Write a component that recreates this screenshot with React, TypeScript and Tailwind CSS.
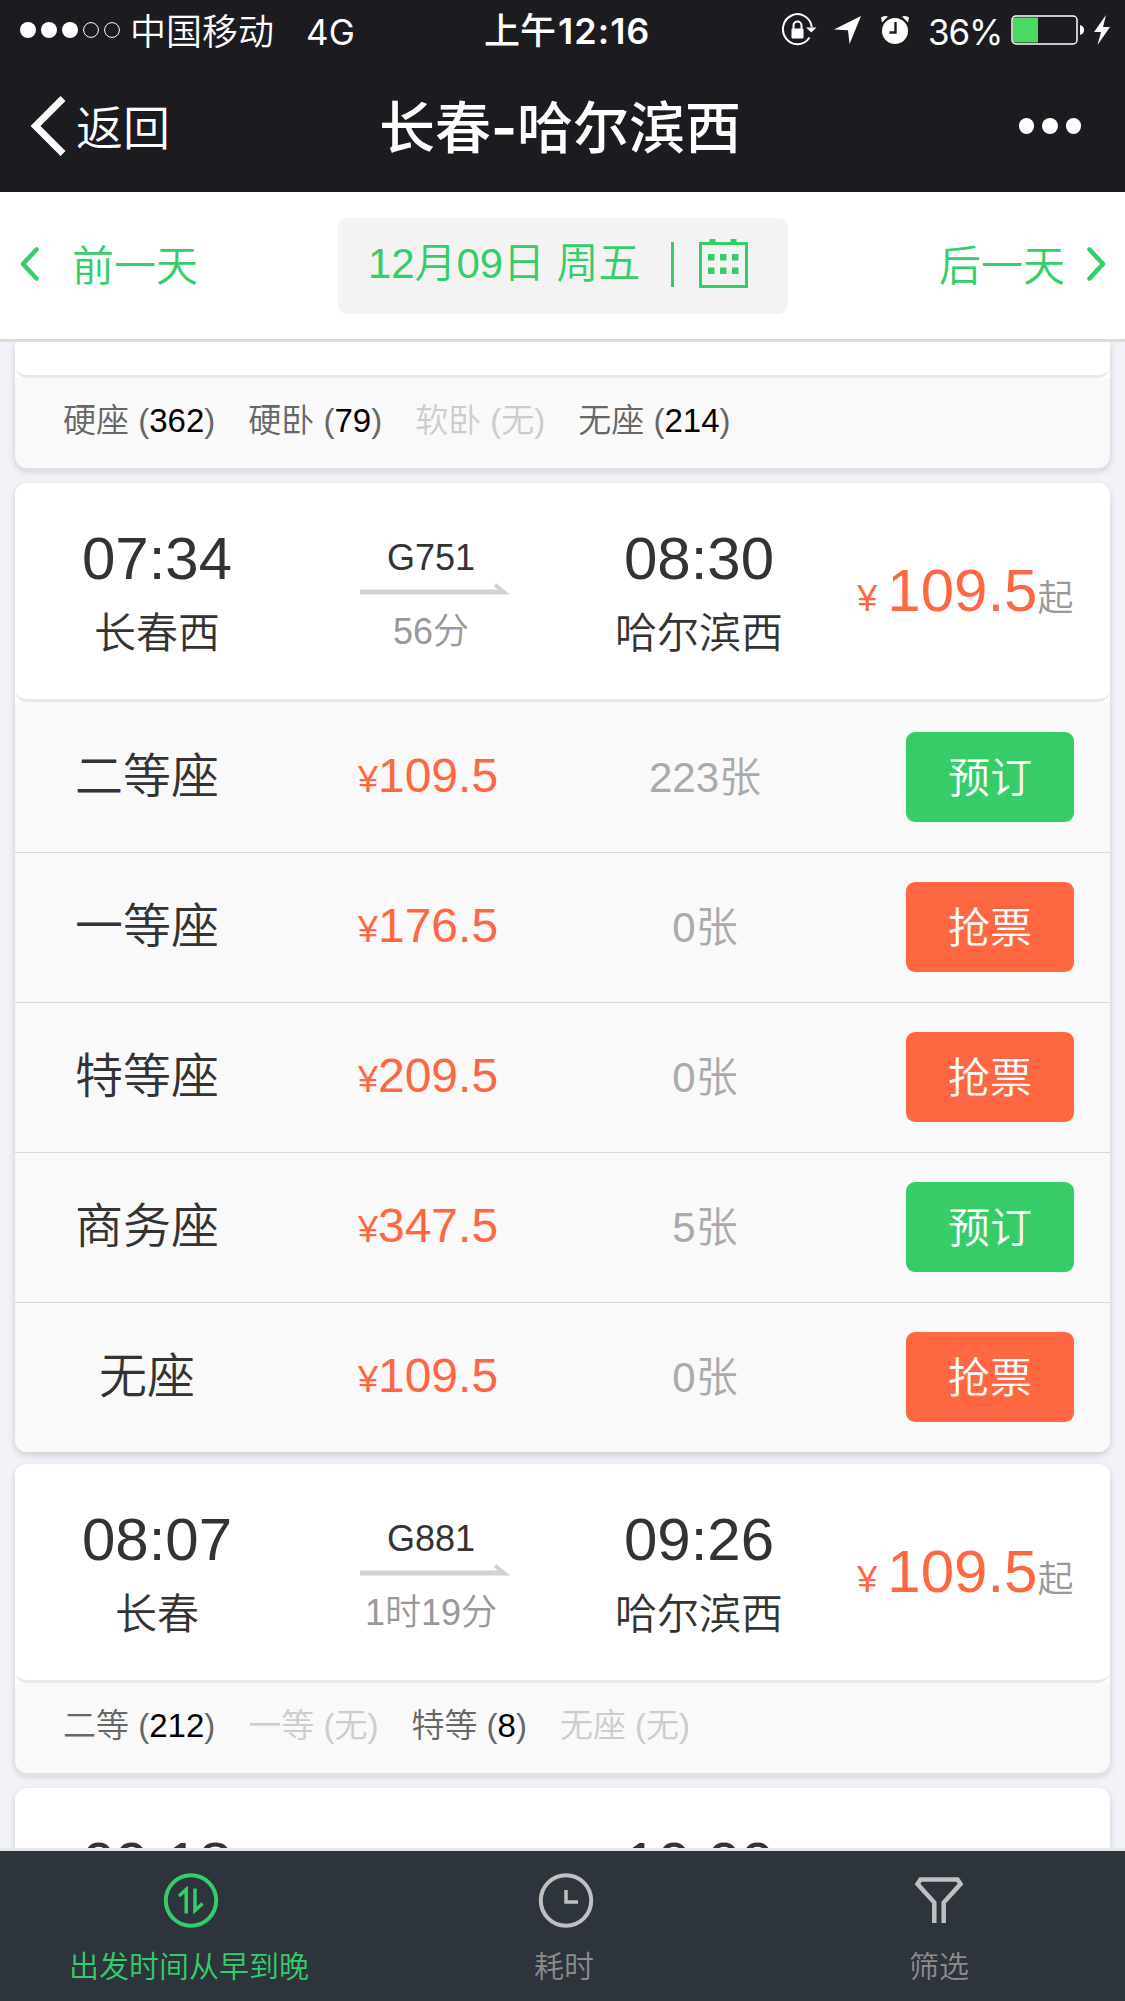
import type { ReactNode } from 'react'

type Seat = { name: string; price: string; left: number }
type Tag = { name: string; left: number }

interface Train {
  no: string
  depart: string
  from: string
  arrive: string
  to: string
  duration: string
  price: string
}

const G751: Train = { no: 'G751', depart: '07:34', from: '长春西', arrive: '08:30', to: '哈尔滨西', duration: '56分', price: '109.5' }
const G881: Train = { no: 'G881', depart: '08:07', from: '长春', arrive: '09:26', to: '哈尔滨西', duration: '1时19分', price: '109.5' }

const seats: Seat[] = [
  { name: '二等座', price: '109.5', left: 223 },
  { name: '一等座', price: '176.5', left: 0 },
  { name: '特等座', price: '209.5', left: 0 },
  { name: '商务座', price: '347.5', left: 5 },
  { name: '无座', price: '109.5', left: 0 },
]

function StatusBar() {
  return (
    <div className="flex h-[60px] items-center font-['Inter','Noto_Sans_CJK_SC',sans-serif] text-[36px] font-normal leading-[60px]">
      <div className="flex w-[484px] items-center pl-5">
        <svg width="101" height="18" viewBox="0 0 101 18" fill="#fff">
          <circle cx="8" cy="9" r="8" />
          <circle cx="29" cy="9" r="8" />
          <circle cx="50" cy="9" r="8" />
          <circle cx="71" cy="9" r="7.4" fill="none" stroke="#fff" />
          <circle cx="92" cy="9" r="7.4" fill="none" stroke="#fff" />
        </svg>
        <span className="ml-[9px] pt-[3px] font-[350]">中国移动</span>
        <span className="ml-[32px] pt-[3px] text-[35px]">4G</span>
      </div>
      <span className="w-[297px] whitespace-nowrap pt-[2px] font-medium">
        上午<span className="ml-[2px] text-[36px] font-semibold tracking-[1px]">12:16</span>
      </span>
      <svg width="36" height="34" viewBox="0 0 36 34" fill="none" stroke="#fff" strokeWidth="2">
        <path d="M28.5 24.500A14.500 15 0 1 1 30.800 14" />
        <path d="M25 14.500h10.500l-5.200 5z" fill="#fff" stroke="none" />
        <rect x="10.500" y="15.500" width="12" height="10" rx="1" fill="#fff" stroke="none" />
        <path d="M12.500 17v-4.500a4 4 0 0 1 8 0V17" />
      </svg>
      <svg className="ml-[17px]" width="27" height="28" viewBox="0 0 27 28" fill="#fff">
        <path d="M27 0L0 13.500l14 .8L15.500 28z" />
      </svg>
      <svg className="ml-[20px]" width="28" height="30" viewBox="0 0 28 30">
        <circle cx="14" cy="16" r="13" fill="#fff" />
        <path d="M1 7.500L0 2.500Q3 0 7 1.500zM27 7.500l1-5Q25 0 21 1.500z" fill="#fff" />
        <path d="M14.500 7v10.500H8.500" fill="none" stroke="#1c1b20" strokeWidth="2.400" />
      </svg>
      <span className="ml-[19px] w-[83px] whitespace-nowrap pt-[3px] text-[35px] tracking-[-1.2px]">36%</span>
      <svg width="74" height="30" viewBox="0 0 74 30">
        <rect x="1" y="1" width="65" height="28" rx="4" fill="none" stroke="#fff" strokeWidth="1.500" />
        <path d="M3 2.500h24v25H3a1.500 1.500 0 0 1-1-1.500V4a1.500 1.500 0 0 1 1-1.500z" fill="#4cd964" />
        <path d="M69 10q4 1 4 5t-4 5z" fill="#fff" />
      </svg>
      <svg className="ml-[9px]" width="16" height="30" viewBox="0 0 16 30" fill="#fff">
        <path d="M12 0L0 17h7L3.500 30 16 12H9z" />
      </svg>
    </div>
  )
}

function NavBar() {
  return (
    <div className="grid h-[132px] grid-cols-[375px_1fr_375px] items-center">
      <div className="flex items-center pl-[30px]">
        <svg width="36" height="60" viewBox="0 0 36 60" fill="none" stroke="#fff" strokeWidth="7">
          <path d="M33 2.500L5.500 30 33 57.500" />
        </svg>
        <span className="ml-[10px] pt-[5px] text-[47px] leading-none">返回</span>
      </div>
      <h1 className="whitespace-nowrap pr-[5px] pt-[3px] text-center font-['Inter','Noto_Sans_CJK_SC',sans-serif] text-[56px] font-medium leading-none">
        长春<span className="font-bold">-</span>哈尔滨西
      </h1>
      <div className="flex justify-end gap-[8px] pr-[44px]">
        <i className="size-[15.500px] rounded-full bg-white" />
        <i className="size-[15.500px] rounded-full bg-white" />
        <i className="size-[15.500px] rounded-full bg-white" />
      </div>
    </div>
  )
}

function CalendarIcon() {
  return (
    <svg width="49" height="50" viewBox="0 0 49 50" fill="#35cd69">
      <rect x="1.500" y="4.500" width="46" height="43" fill="none" stroke="#35cd69" strokeWidth="3" />
      <path d="M10.500 0h6v5h-6zM31.500 0h6v5h-6z" />
      <path d="M9 15h6.500v6.500H9zM21 15h6.500v6.500H21zM33 15h6.500v6.500H33zM9 28.500h6.500V35H9zM21 28.500h6.500V35H21zM33 28.500h6.500V35H33z" />
    </svg>
  )
}

function Chevron({ flip }: { flip?: boolean }) {
  return (
    <svg className={flip ? '-mt-[3px] rotate-180' : '-mt-[3px]'} width="19" height="34" viewBox="0 0 19 34" fill="none" stroke="#35cd69" strokeWidth="4.500" strokeLinecap="round" strokeLinejoin="round">
      <path d="M16.500 2.500L3 17l13.500 14.500" />
    </svg>
  )
}

function DateBar() {
  return (
    <div className="flex h-[150px] items-center justify-between border-b-[3px] border-[#dcdcdc] bg-white px-[20px] text-[42px] leading-[60px] text-[#35cd69]">
      <div className="flex w-[318px] items-center">
        <Chevron />
        <span className="ml-[33px] pt-[3px]">前一天</span>
      </div>
      <div className="flex h-24 w-[450px] shrink-0 items-center rounded-[9px] bg-[#f3f3f3] pl-[30px]">
        <span className="w-[303px] whitespace-nowrap pb-[3px] tracking-[-0.1px]">12月09日 周五</span>
        <i className="-mt-[2px] h-[45px] w-[3px] bg-[#35cd69]" />
        <span className="-mt-[3px] ml-[25px]">
          <CalendarIcon />
        </span>
      </div>
      <div className="-mr-[1px] flex flex-1 items-center justify-end">
        <span className="mr-[22px] pt-[3px]">后一天</span>
        <Chevron flip />
      </div>
    </div>
  )
}

function TrainHead({ train }: { train: Train }) {
  return (
    <div className="flex h-[219px] rounded-[12px] border-b-[3px] border-[#e9e9e9] bg-white text-[#333]">
      <div className="w-[284px] pt-[42px] text-center">
        <div className="text-[60px] leading-[68px]">{train.depart}</div>
        <div className="mt-[11px] text-[42px] leading-[60px]">{train.from}</div>
      </div>
      <div className="flex w-[264px] flex-col items-center pt-[51px] text-[36px] leading-[48px]">
        <div>{train.no}</div>
        <svg className="ml-[8px] mt-px" width="150" height="12" viewBox="0 0 150 12" fill="#d2d2d2">
          <path d="M0 6.500h138l-4-3 2-3.500 14 11.500H0z" />
        </svg>
        <div className="mt-[13px] text-[#999]">{train.duration}</div>
      </div>
      <div className="w-[272px] pt-[42px] text-center">
        <div className="text-[60px] leading-[68px]">{train.arrive}</div>
        <div className="mt-[11px] text-[42px] leading-[60px]">{train.to}</div>
      </div>
      <div className="flex-1 whitespace-nowrap pr-[36.500px] pt-[74px] text-right text-[36px] leading-[68px] text-[#ff6742]">
        ¥ <span className="text-[60px]">{train.price}</span>
        <span className="text-[#999]">起</span>
      </div>
    </div>
  )
}

function SeatRow({ seat }: { seat: Seat }) {
  return (
    <div className="flex h-[150px] items-center text-center text-[42px] leading-[60px] shadow-[0_1px_0_#d9d9d9] last:shadow-none">
      <div className="w-[264px] text-[48px] text-[#333]">{seat.name}</div>
      <div className="w-[298px] pt-px text-[36px] text-[#ff6742]">
        ¥<span className="text-[48px]">{seat.price}</span>
      </div>
      <div className="w-[256px] pt-px text-[#aaa]">{seat.left}张</div>
      <button className={`ml-[73px] h-[90px] w-[168px] rounded-[9px] pt-[3px] text-white ${seat.left > 0 ? 'bg-[#36cd69]' : 'bg-[#ff6742]'}`}>
        {seat.left > 0 ? '预订' : '抢票'}
      </button>
    </div>
  )
}

function TagRow({ tags }: { tags: Tag[] }) {
  return (
    <div className="flex h-[90px] items-center gap-[33px] rounded-b-[12px] bg-[#f9f9f9] pb-[4px] pl-[48px] text-[33px] leading-[48px] shadow-[0_4px_0_#e0e1e3]">
      {tags.map((t) => (
        <span key={t.name} className={t.left > 0 ? 'text-[#666]' : 'text-[#ccc]'}>
          {t.name} ({t.left > 0 ? <b className="font-normal text-black">{t.left}</b> : '无'})
        </span>
      ))}
    </div>
  )
}

function Card({ children, className = '' }: { children: ReactNode; className?: string }) {
  return (
    <section className={`shrink-0 rounded-[12px] bg-white shadow-[0_3px_7px_rgba(0,0,0,0.16)] ${className}`}>{children}</section>
  )
}

function TabBar() {
  return (
    <nav className="grid h-[153px] grid-cols-[382px_365px_378px] border-t-[3px] border-[#e6e6e6] bg-[#2e343c] text-[30px] leading-[44px] text-[#8c8c8c]">
      <div className="flex flex-col items-center pt-[21px] text-[#35cd69]">
        <svg width="56" height="57" viewBox="0 0 56 57" fill="none" stroke="#35cd69" strokeWidth="3.500">
          <circle cx="28" cy="28.500" r="25.200" strokeWidth="4" />
          <path d="M16 24l7.200-6.500v24M32 16.500v22l7.500-7" />
        </svg>
        <span className="mr-[4px] mt-[16px]">出发时间从早到晚</span>
      </div>
      <div className="flex flex-col items-center pt-[21px]">
        <svg className="ml-[3px]" width="56" height="57" viewBox="0 0 56 57" fill="none" stroke="#c0c0c0" strokeWidth="3.500">
          <circle cx="28" cy="28.500" r="25.200" strokeWidth="4" />
          <path d="M28 18v12h12" />
        </svg>
        <span className="mr-px mt-[16px]">耗时</span>
      </div>
      <div className="flex flex-col items-center pl-[6px] pt-[21px]">
        <svg width="56" height="57" viewBox="0 0 56 57" fill="none" stroke="#c0c0c0" strokeWidth="4.500">
          <path d="M23.300 51V30.500L6.500 12l3-4.500h37l3 4.500L32.700 30.500V51" />
        </svg>
        <span className="mt-[16px]">筛选</span>
      </div>
    </nav>
  )
}

export default function App() {
  return (
    <div className="flex h-[2001px] w-[1125px] flex-col overflow-hidden bg-[#f2f3f8] font-['Liberation_Sans','Noto_Sans_CJK_SC',sans-serif] font-[350]">
      <header className="h-[192px] shrink-0 bg-[#1c1b20] text-white">
        <StatusBar />
        <NavBar />
      </header>
      <DateBar />
      <main className="flex h-[1506px] flex-col overflow-hidden px-[15px]">
        <Card className="mb-[15px] rounded-t-none">
          <div className="h-9 rounded-b-[12px] border-b-[3px] border-[#e9e9e9]" />
          <TagRow tags={[{ name: '硬座', left: 362 }, { name: '硬卧', left: 79 }, { name: '软卧', left: 0 }, { name: '无座', left: 214 }]} />
        </Card>
        <Card className="mb-[12px]">
          <TrainHead train={G751} />
          <div className="rounded-b-[12px] bg-[#f9f9f9]">
            {seats.map((s) => (
              <SeatRow key={s.name} seat={s} />
            ))}
          </div>
        </Card>
        <Card className="mb-[15px]">
          <TrainHead train={G881} />
          <TagRow tags={[{ name: '二等', left: 212 }, { name: '一等', left: 0 }, { name: '特等', left: 8 }, { name: '无座', left: 0 }]} />
        </Card>
        {/* only the top of this one shows above the tab bar */}
        <Card className="h-[60px] overflow-hidden rounded-b-none">
          <div className="flex pt-[42px] text-center text-[60px] leading-[68px] text-[#333]">
            <span className="w-[284px]">09:18</span>
            <span className="ml-[264px] w-[272px]">10:00</span>
          </div>
        </Card>
      </main>
      <TabBar />
    </div>
  )
}
